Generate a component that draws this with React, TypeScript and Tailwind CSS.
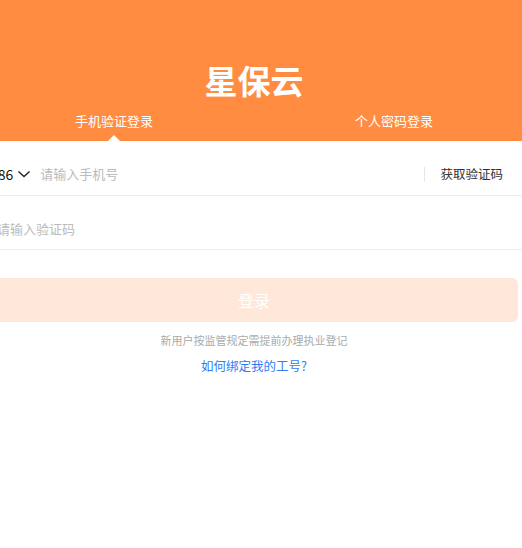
import React from "react";

export default function App() {
  return (
    <div className="w-[522px] h-[548px] overflow-hidden bg-white">
      <div className="ml-[-26px] w-[560px] font-['Noto_Sans_CJK_SC','Noto_Sans',sans-serif]">
        <div className="relative h-[141px] bg-[#ff8c40] flex flex-col">
          <div className="h-[58px]" />
          <div className="text-center text-white text-[33px] font-bold leading-[44px]">星保云</div>
          <div className="flex mt-[8px]">
            <div className="flex-1 text-center text-white text-[13px] leading-[22px]">手机验证登录</div>
            <div className="flex-1 text-center text-white text-[13px] leading-[22px]">个人密码登录</div>
          </div>
          <div className="absolute bottom-0 left-[134px] w-0 h-0 border-l-[6px] border-r-[6px] border-b-[6px] border-l-transparent border-r-transparent border-b-white" />
        </div>
        <div className="ml-[16px] h-[55px] pt-[12px] flex items-center border-b border-[#eeeeee]">
          <span className="text-[14px] text-[#111] leading-none">+86</span>
          <svg width="14" height="14" viewBox="0 0 14 14" className="ml-[4px]" fill="none" stroke="#222" strokeWidth="1.4">
            <path d="M1.5 4.5 L7 9.5 L12.5 4.5" />
          </svg>
          <span className="ml-[9px] text-[13px] text-[#bbbbbb]">请输入手机号</span>
          <div className="flex-1" />
          <div className="w-px h-[15px] bg-[#e6e6e6]" />
          <span className="ml-[15px] mr-[31px] text-[12.5px] text-[#333]">获取验证码</span>
        </div>
        <div className="ml-[16px] h-[54px] pt-[12px] flex items-center border-b border-[#eeeeee]">
          <span className="ml-[7px] text-[13px] text-[#bbbbbb]">请输入验证码</span>
        </div>
        <div className="mx-[16px] mt-[28px] h-[44px] rounded-[6px] bg-[#ffe8da] flex items-center justify-center">
          <span className="text-white text-[16px]">登录</span>
        </div>
        <div className="mt-[9px] text-center text-[11px] text-[#aaaaaa] leading-[18px]">新用户按监管规定需提前办理执业登记</div>
        <div className="mt-[7px] text-center text-[12.5px] text-[#2f7cf6] leading-[20px]">如何绑定我的工号?</div>
      </div>
    </div>
  );
}
